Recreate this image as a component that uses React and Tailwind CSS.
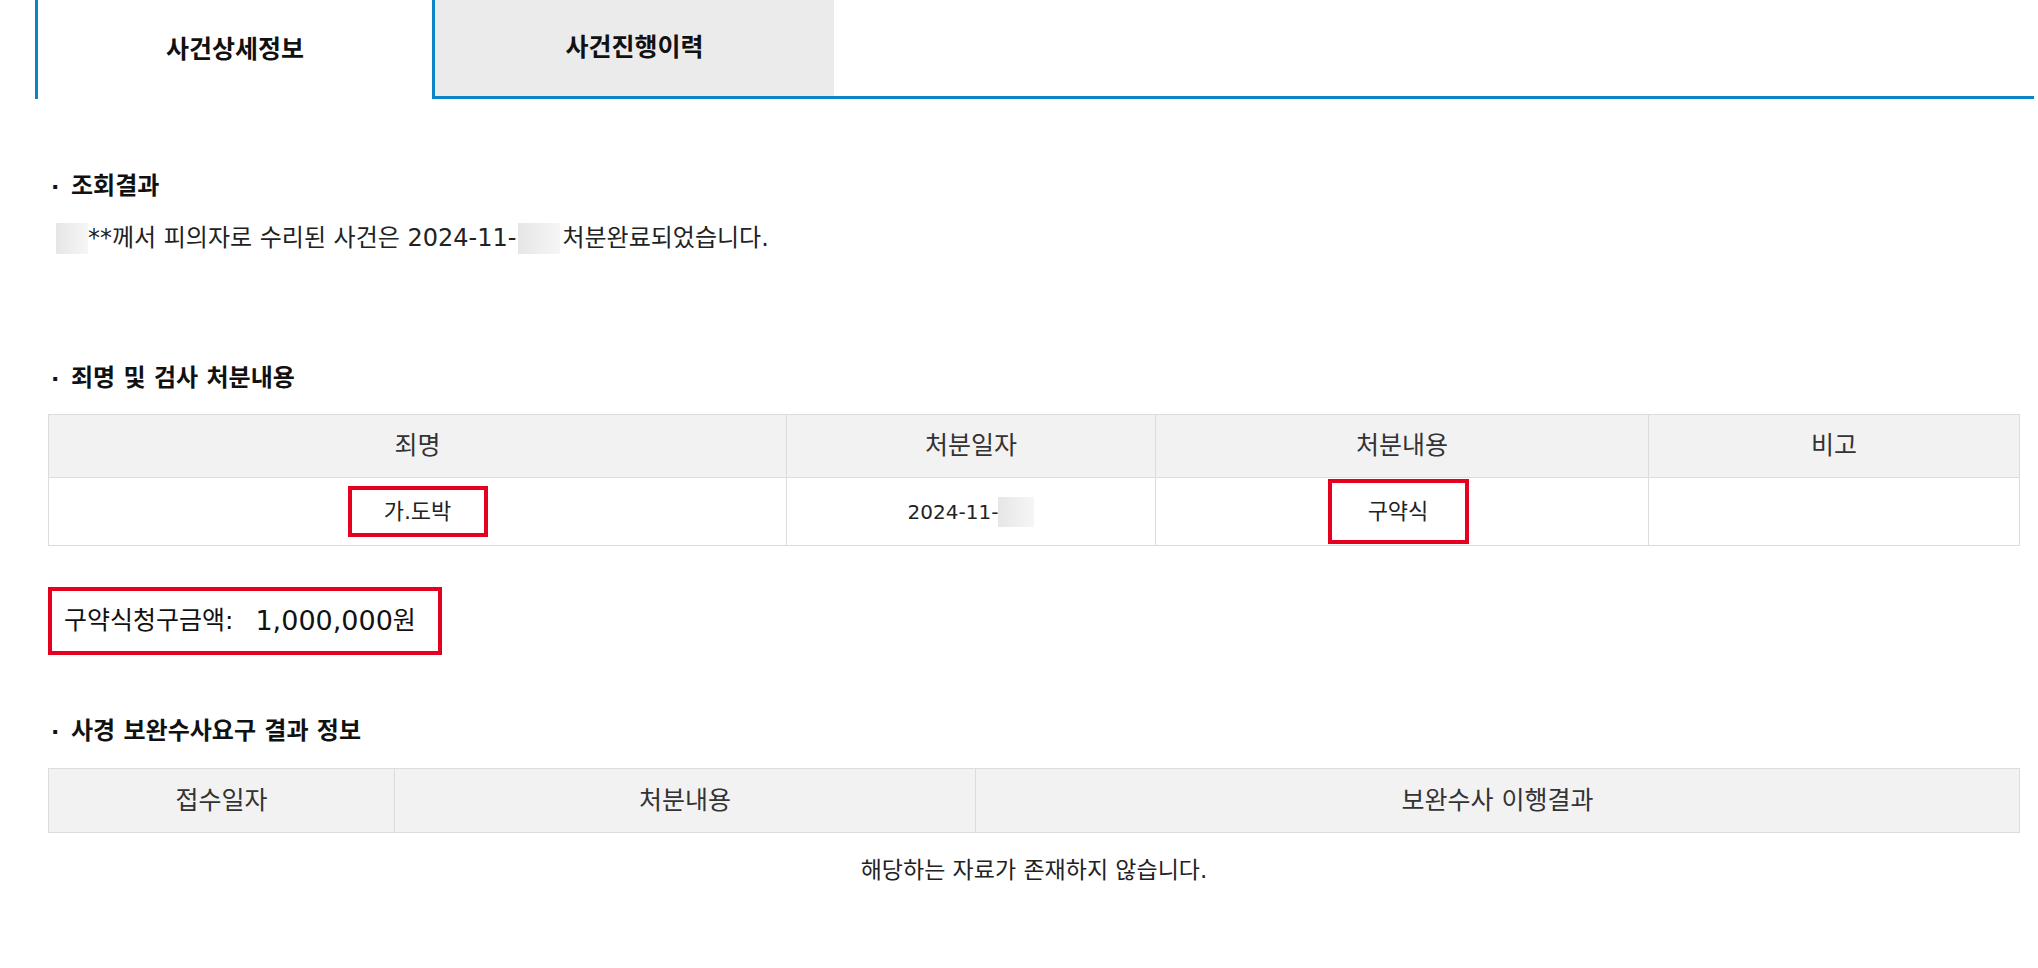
const BLUE = 'border-[#0b84c8]';

function Title({ children, className = '' }) {
  return (
    <h3 className={'flex items-center h-[30px] pl-[3px] text-[24px] font-semibold text-[#111] ' + className}>
      <span className="w-[20px] text-[22px]">·</span>
      {children}
    </h3>
  );
}

// blurred-out personal data
function Masked({ className = '' }) {
  return <span className={'inline-block bg-gradient-to-r from-[#e6e6e6] to-[#f6f6f6] ' + className} />;
}

function RedBox({ children, className = '' }) {
  return (
    <span className={'inline-flex items-center justify-center border-4 border-[#e60020] ' + className}>
      {children}
    </span>
  );
}

export default function App() {
  return (
    <div className="min-h-screen bg-white font-['DejaVu_Sans','Noto_Sans_CJK_KR',sans-serif] text-[#222]">
      {/* Tabs */}
      <div className="flex h-[99px] pl-[35px] pr-[4px]">
        <div className={'w-[400px] border-x-[3px] flex items-center justify-center text-[25px] font-bold text-[#111] ' + BLUE}>
          사건상세정보
        </div>
        <div className={'w-[399px] bg-[#ebebeb] border-b-[3px] flex items-center justify-center text-[25px] font-bold text-[#111] ' + BLUE}>
          사건진행이력
        </div>
        <div className={'flex-1 border-b-[3px] ' + BLUE} />
      </div>

      <div className="pl-[48px] pr-[18px]">
        {/* 조회결과 */}
        <Title className="mt-[72px]">조회결과</Title>
        <p className="mt-[22px] flex items-center h-[30px] pl-[8px] text-[24px]">
          <Masked className="w-[32px] h-[31px]" />
          <span>**께서 피의자로 수리된 사건은 2024-11-</span>
          <Masked className="w-[42px] h-[31px] mx-[2px]" />
          <span>처분완료되었습니다.</span>
        </p>

        {/* 죄명 및 검사 처분내용 */}
        <Title className="mt-[110px]">죄명 및 검사 처분내용</Title>
        <table className="mt-[21px] w-full table-fixed border-collapse">
          <colgroup>
            <col className="w-[738px]" />
            <col className="w-[369px]" />
            <col className="w-[493px]" />
            <col />
          </colgroup>
          <thead>
            <tr className="h-[63px] bg-[#f2f2f2] text-[25px] text-[#333]">
              <th className="font-normal border border-[#dcdcdc]">죄명</th>
              <th className="font-normal border border-[#dcdcdc]">처분일자</th>
              <th className="font-normal border border-[#dcdcdc]">처분내용</th>
              <th className="font-normal border border-[#dcdcdc]">비고</th>
            </tr>
          </thead>
          <tbody>
            <tr className="h-[68px] text-[22px] text-center">
              <td className="border border-[#dcdcdc]">
                <RedBox className="w-[140px] h-[51px] align-middle">가.도박</RedBox>
              </td>
              <td className="border border-[#dcdcdc] text-[20px]">
                <span className="inline-flex items-center">
                  2024-11-
                  <Masked className="w-[36px] h-[30px]" />
                </span>
              </td>
              <td className="border border-[#dcdcdc]">
                <RedBox className="w-[141px] h-[65px] mr-[8px] align-middle">구약식</RedBox>
              </td>
              <td className="border border-[#dcdcdc]" />
            </tr>
          </tbody>
        </table>

        {/* 구약식 청구금액 */}
        <div className="mt-[41px] flex items-center w-[394px] h-[68px] pl-[12px] border-4 border-[#e60020] text-[#111]">
          <span className="text-[25px]">구약식청구금액:</span>
          <span className="ml-[22px] text-[27px]">1,000,000</span>
          <span className="text-[25px]">원</span>
        </div>

        {/* 사경 보완수사요구 결과 정보 */}
        <Title className="mt-[61px]">사경 보완수사요구 결과 정보</Title>
        <table className="mt-[22px] w-full table-fixed border-collapse">
          <colgroup>
            <col className="w-[346px]" />
            <col className="w-[581px]" />
            <col />
          </colgroup>
          <thead>
            <tr className="h-[64px] bg-[#f2f2f2] text-[25px] text-[#333]">
              <th className="font-normal border border-[#dcdcdc]">접수일자</th>
              <th className="font-normal border border-[#dcdcdc]">처분내용</th>
              <th className="font-normal border border-[#dcdcdc]">보완수사 이행결과</th>
            </tr>
          </thead>
        </table>
        <p className="mt-[22px] h-[30px] flex items-center justify-center text-[23px]">
          해당하는 자료가 존재하지 않습니다.
        </p>
      </div>
    </div>
  );
}
